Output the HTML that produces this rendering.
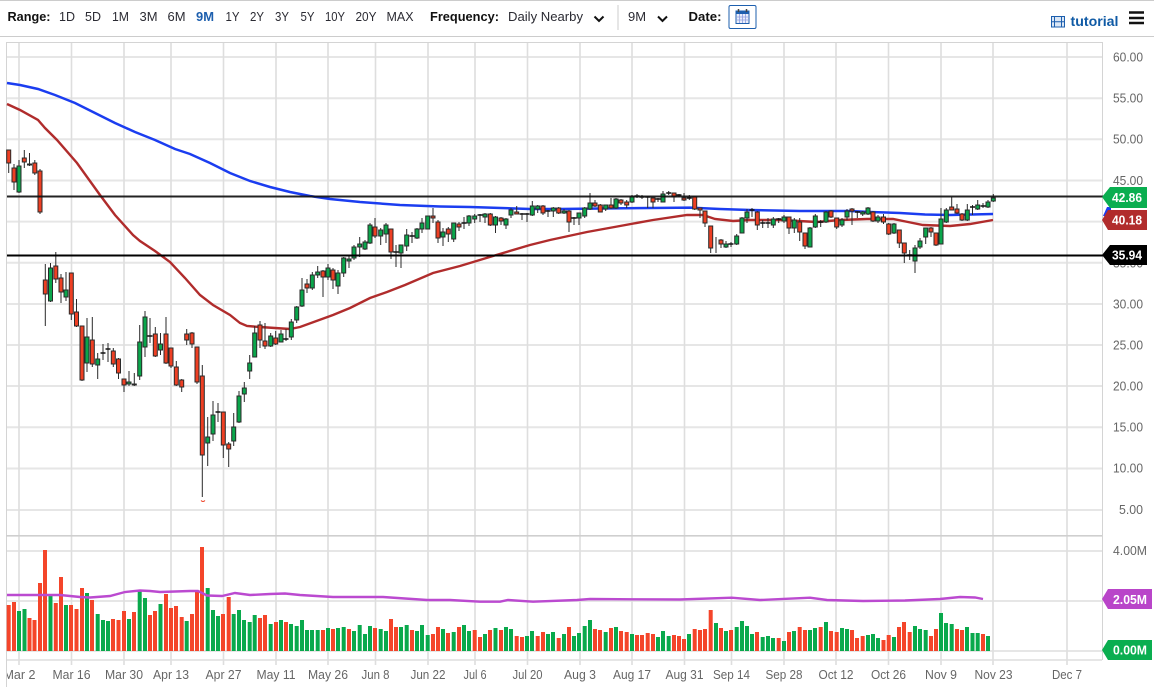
<!DOCTYPE html>
<html><head><meta charset="utf-8"><title>Chart</title>
<style>
html,body{margin:0;padding:0;background:#fff;width:1154px;height:695px;overflow:hidden}
svg{display:block}
text{font-family:"Liberation Sans",sans-serif}
.t{font-size:13px;fill:#2b2b33}
.b{font-size:13px;font-weight:bold;fill:#111}
.a{font-size:12.5px;fill:#666}
.d{font-size:12.5px;fill:#666;text-anchor:middle}
.w{font-size:12.5px;font-weight:bold;fill:#fff;text-anchor:middle}
</style></head><body>
<svg width="1154" height="695" viewBox="0 0 1154 695" xmlns="http://www.w3.org/2000/svg">
<defs><clipPath id="c"><rect x="7" y="660" width="1100" height="30"/></clipPath></defs>
<rect width="1154" height="695" fill="#fff"/>
<!-- toolbar -->
<rect x="0" y="0" width="1154" height="1" fill="#ccc"/>
<rect x="0" y="36" width="1154" height="1" fill="#ccc"/>
<text class="b" x="7.5" y="21" textLength="43" lengthAdjust="spacingAndGlyphs">Range:</text>
<text class="t" x="59" y="21" textLength="16" lengthAdjust="spacingAndGlyphs">1D</text>
<text class="t" x="85" y="21" textLength="16" lengthAdjust="spacingAndGlyphs">5D</text>
<text class="t" x="112" y="21" textLength="17" lengthAdjust="spacingAndGlyphs">1M</text>
<text class="t" x="139.5" y="21" textLength="18" lengthAdjust="spacingAndGlyphs">3M</text>
<text class="t" x="167.5" y="21" textLength="18" lengthAdjust="spacingAndGlyphs">6M</text>
<text x="196" y="21" font-size="13" font-weight="bold" fill="#1d5fae" textLength="18" lengthAdjust="spacingAndGlyphs">9M</text>
<text class="t" x="225.5" y="21" textLength="14" lengthAdjust="spacingAndGlyphs">1Y</text>
<text class="t" x="250" y="21" textLength="14" lengthAdjust="spacingAndGlyphs">2Y</text>
<text class="t" x="275" y="21" textLength="14" lengthAdjust="spacingAndGlyphs">3Y</text>
<text class="t" x="300.5" y="21" textLength="14" lengthAdjust="spacingAndGlyphs">5Y</text>
<text class="t" x="325" y="21" textLength="20" lengthAdjust="spacingAndGlyphs">10Y</text>
<text class="t" x="355.5" y="21" textLength="21" lengthAdjust="spacingAndGlyphs">20Y</text>
<text class="t" x="386.5" y="21" textLength="27" lengthAdjust="spacingAndGlyphs">MAX</text>
<text class="b" x="430" y="21" textLength="69" lengthAdjust="spacingAndGlyphs">Frequency:</text>
<text class="t" x="508" y="21" textLength="75" lengthAdjust="spacingAndGlyphs">Daily Nearby</text>
<path d="M594.5 16.5l4.5 4.5 4.5-4.5" fill="none" stroke="#111" stroke-width="2"/>
<rect x="617.5" y="5" width="1" height="25" fill="#ccc"/>
<text class="t" x="628" y="21" textLength="18" lengthAdjust="spacingAndGlyphs">9M</text>
<path d="M658 16.5l4.5 4.5 4.5-4.5" fill="none" stroke="#111" stroke-width="2"/>
<text class="b" x="688.5" y="21" textLength="33" lengthAdjust="spacingAndGlyphs">Date:</text>
<rect x="729" y="5.5" width="27" height="23" rx="1.5" fill="#fff" stroke="#1d5fae" stroke-width="1"/>
<rect x="736" y="11" width="13" height="12.5" fill="#e9eefb" stroke="#1d5fae"/>
<rect x="736" y="11" width="13" height="3" fill="#1d5fae"/>
<path d="M738.5 9v3M746.5 9v3" stroke="#444" stroke-width="1.5"/>
<path d="M739.5 14v9M742.5 14v9M745.5 14v9M736 17h13M736 20h13" stroke="#8f9fe0" stroke-width=".8"/>
<rect x="1051.5" y="16.5" width="13" height="10.5" fill="#dbe7f5" stroke="#1d5fae"/>
<path d="M1054.5 16.5v10.5M1061.5 16.5v10.5M1051.5 21.7h13" stroke="#1d5fae" stroke-width="1"/>
<text x="1070.5" y="26" font-size="13.5" font-weight="bold" fill="#0f5aa5" textLength="48" lengthAdjust="spacingAndGlyphs">tutorial</text>
<path d="M1129 12.5h15M1129 18h15M1129 23h15" stroke="#111" stroke-width="2.6"/>
<!-- grid -->
<path d="M7 57H1102M7 98.2H1102M7 139.3H1102M7 180.5H1102M7 221.6H1102M7 262.8H1102M7 304H1102M7 345H1102M7 386H1102M7 427.3H1102M7 468.5H1102M7 510H1102M7 551H1102M7 601H1102M7 651H1102M7 660H1102" stroke="#e6e6e6" stroke-width="2" fill="none"/>
<path d="M19 42V665M71.5 42V665M124 42V665M171 42V665M223.5 42V665M276 42V665M328 42V665M375.5 42V665M428 42V665M475 42V665M527.5 42V665M580 42V665M632 42V665M684.5 42V665M731.5 42V665M784 42V665M836 42V665M888.5 42V665M941 42V665M993 42V665M1067 42V665" stroke="#dedede" stroke-width="1.6" fill="none"/>
<rect x="6" y="42" width="1096" height="1" fill="#d4d4d4"/>
<rect x="6" y="42" width="1" height="645" fill="#d4d4d4"/>
<rect x="1102" y="42" width="1" height="618" fill="#d4d4d4"/>
<rect x="6" y="535" width="1096" height="1.6" fill="#cfcfcf"/>
<!-- moving averages -->
<polyline fill="none" stroke="#1b3df0" stroke-width="2.5" points="7,83 20,85 38,89 55,95 75,103 95,113 115,123 135,132 155,140 175,149 190,154 210,163 230,173 250,181 270,187 290,192 310,196 330,199 360,202 400,205 440,206.5 470,207 530,209 560,209 600,208.5 650,208 690,207.6 720,209 750,210 800,211 850,211 870,212 900,213 925,214.5 950,215 993,214"/>
<polyline fill="none" stroke="#b02c2c" stroke-width="2.4" points="7,104 20,110 38,120 45,128 57,140 77,163 100,195 115,215 133,235 140,241 155,251 170,262 185,278 200,295 213,305 230,315 240,323 247,326 260,327 275,328 290,329 300,327 333,315 350,308 370,298 387,292 405,285 433,273 460,266 493,256 530,245 550,240 587,232 620,226 653,220 687,215 703,215 715,219 733,221 750,220 780,220 817,222 840,220 867,219 893,219 908,222 923,225 950,226 970,224 993,220"/>
<!-- wicks -->
<path fill="none" stroke="#2a2a2a" stroke-width="1" d="M8.7 150V173M14 164V190M19 160V193M24.3 150V168M29.5 153V166M34.8 160V175M40 169V214M45.3 264V326M50.5 263V302M55.8 252V283M61 274V303M66 272V301M71.3 273V320M76.5 299V327M82 326V381M87 318V372M92.3 317V367M97.7 353V379M103 344V360M108 343V362M113.3 348V367M118.5 358V379M124 379V392M129 371V386M134.3 373V386M139.7 325V380M145 311V357M150 318V343M155.3 327V357M160.5 333V355M166 317V364M171 348V368M176.3 361V386M181.7 379V392M186.7 329V345M192 332V348M197 347V384M202.3 365V497M207.7 417V466M213 401V441M218 403V422M223.3 412V458M228.7 442V467M233.7 413V446M239 391V423M244.3 382V402M249.7 355V379M254.7 326V357M260 321V348M265 323V349M270.7 333V347M275.7 331V345M281 330V342M286 329V341M291.3 319V340M296.7 306V323M302 278V307M307 279V293M312.3 272V290M317.7 266V278M323 270V297M328 264V280M333 268V289M338 270V294M343.7 257V277M349 255V268M354 245V260M359.7 237V257M365 240V250M370 223V244M375 218V238M380.7 228V245M386 223V243M391 229V259M396 245V267M401 245V268M406.7 229V251M412 232V243M417 228V239M422 218V233M427.7 216V229M433 208V223M438 220V243M443 228V246M448.3 227V242M453.7 223V242M459 222V231M464 217V229M469 215V226M474.7 214V223M480 214V222M485 213V223M490.3 213V226M495.5 216V233M501 217V225M506 218V229M511 208V218M516.7 206V214M522 213V220M527 213V222M532.3 201V216M537.7 205V213M543 205V215M548 210V217M553.3 207V217M558.7 207V214M564 209V214M569 210V232M574 217V225M579 213V225M584.7 207V218M590 193V210M595 200V207M600.3 204V212M605.7 205V211M611 198V209M616 198V209M621 199V205M626.7 200V208M632 195V203M637 194V198M642 195V199M647.7 196V208M653 198V208M658 198V202M663 191V202M668.7 191V195M674 193V202M679 194V197M684 193V201M689.3 195V200M694.7 197V210M700 208V218M705 211V227M710.7 226V253M716 237V253M721 239V248M726 241V248M731 242V247M736.7 234V245M742 217V233M747 209V223M752 208V217M757.3 211V230M762.7 220V228M768 218V228M773.3 217V228M778.7 218V223M784 215V223M789 217V234M794.3 218V233M799.7 218V241M805 233V249M810 227V247M815.3 214V228M820.7 220V227M826 211V223M831 210V218M836.7 218V229M842 218V227M847 209V220M852 208V225M857.3 211V218M862.7 211V216M868 207V215M873 211V222M878 215V223M883.5 214V224M888.7 223V235M894 223V234M899.3 230V248M904.3 243V263M909.7 250V260M915 245V273M920 238V249M925.7 228V244M931 227V237M936 233V246M941 208V244M946.3 208V223M951.7 197V210M957 204V214M962 213V221M967.3 204V221M972.5 205V215M977.7 200V210M983 203V208M988 200V208M993.3 194V202"/>
<path fill="none" stroke="#111" stroke-width="1.4" d="M100.5 353h5M105.5 349h5M147.5 336h5M215.5 412h5M283.5 339h5M393.5 252h5M409.5 236h5M461.5 223h5M477.5 215h5M519.5 214h5M524.5 214h5M545.5 211h5M571.5 218h5M634.5 196h5M639.5 197h5M645.2 197h5M655.5 199h5M666.2 193h5M676.5 195h5M686.8 198h5M728.5 244h5M749.5 210h5M760.2 223h5M765.5 223h5M776.2 219h5M818.2 222h5M855 212h5M907.2 255h5M970 207h5M980.5 206h5"/>
<!-- red bodies -->
<path fill="#ee3f23" stroke="#2a2a2a" stroke-width="1" d="M6.7 150h4v13h-4zM12 168h4v14h-4zM22.3 158h4v4h-4zM27.5 164h4v1h-4zM32.8 163h4v10h-4zM38 171h4v41h-4zM43.3 280h4v14h-4zM53.8 266h4v13h-4zM59 278h4v14h-4zM69.3 273h4v41h-4zM74.5 312h4v14h-4zM80 326h4v54h-4zM90.3 340h4v24h-4zM111.3 351h4v13h-4zM116.5 359h4v14h-4zM122 379h4v6h-4zM153.3 334h4v22h-4zM164 334h4v29h-4zM169 348h4v18h-4zM174.3 367h4v18h-4zM179.7 380h4v7h-4zM184.7 334h4v6h-4zM190 333h4v11h-4zM195 347h4v35h-4zM200.3 376h4v79h-4zM221.3 412h4v33h-4zM226.7 444h4v5h-4zM258 325h4v15h-4zM263 341h4v5h-4zM273.7 338h4v6h-4zM305 284h4v4h-4zM321 271h4v6h-4zM331 270h4v10h-4zM373 227h4v9h-4zM389 229h4v23h-4zM431 216h4v2h-4zM436 222h4v16h-4zM446.3 229h4v5h-4zM457 224h4v3h-4zM488.3 214h4v11h-4zM499 218h4v3h-4zM514.7 212h4v2h-4zM541 206h4v7h-4zM556.7 208h4v5h-4zM567 211h4v11h-4zM593 203h4v3h-4zM598.3 205h4v7h-4zM609 205h4v3h-4zM619 200h4v3h-4zM624.7 202h4v3h-4zM651 198h4v4h-4zM672 193h4v4h-4zM682 198h4v2h-4zM692.7 197h4v12h-4zM698 208h4v2h-4zM703 211h4v12h-4zM708.7 226h4v22h-4zM719 240h4v4h-4zM755.3 212h4v13h-4zM787 217h4v11h-4zM797.7 222h4v10h-4zM803 233h4v13h-4zM829 211h4v6h-4zM834.7 218h4v9h-4zM850 209h4v2h-4zM871 212h4v9h-4zM881.5 217h4v5h-4zM886.7 224h4v10h-4zM897.3 230h4v13h-4zM902.3 243h4v10h-4zM929 228h4v4h-4zM934 233h4v12h-4zM949.7 207h4v3h-4zM955 209h4v4h-4zM960 214h4v6h-4z"/>
<!-- green bodies -->
<path fill="#0aa64b" stroke="#2a2a2a" stroke-width="1" d="M17 166h4v26h-4zM48.5 268h4v33h-4zM64 290h4v7h-4zM85 337h4v26h-4zM95.7 359h4v6h-4zM127 382h4v2h-4zM132.3 384h4v1h-4zM137.7 342h4v34h-4zM143 317h4v30h-4zM158.5 344h4v6h-4zM205.7 437h4v6h-4zM211 415h4v19h-4zM231.7 427h4v14h-4zM237 396h4v26h-4zM242.3 388h4v6h-4zM247.7 363h4v8h-4zM252.7 333h4v24h-4zM268.7 336h4v10h-4zM279 334h4v8h-4zM289.3 322h4v15h-4zM294.7 307h4v13h-4zM300 290h4v16h-4zM310.3 275h4v13h-4zM315.7 272h4v3h-4zM326 268h4v9h-4zM336 273h4v13h-4zM341.7 258h4v15h-4zM347 259h4v2h-4zM352 247h4v11h-4zM357.7 244h4v3h-4zM363 242h4v7h-4zM368 225h4v18h-4zM378.7 230h4v6h-4zM384 225h4v9h-4zM399 245h4v8h-4zM404.7 235h4v11h-4zM415 229h4v9h-4zM420 223h4v6h-4zM425.7 216h4v13h-4zM441 232h4v5h-4zM451.7 223h4v16h-4zM467 216h4v7h-4zM472.7 216h4v3h-4zM483 214h4v3h-4zM493.5 217h4v8h-4zM504 219h4v6h-4zM509 210h4v5h-4zM530.3 206h4v9h-4zM535.7 206h4v3h-4zM551.3 208h4v3h-4zM562 211h4v2h-4zM577 213h4v5h-4zM582.7 208h4v8h-4zM588 203h4v6h-4zM603.7 205h4v4h-4zM614 199h4v9h-4zM630 197h4v5h-4zM661 194h4v8h-4zM724 244h4v3h-4zM734.7 236h4v8h-4zM740 218h4v15h-4zM745 212h4v6h-4zM771.3 219h4v6h-4zM782 217h4v4h-4zM792.3 220h4v8h-4zM808 228h4v19h-4zM813.3 216h4v11h-4zM824 212h4v10h-4zM840 220h4v5h-4zM845 211h4v6h-4zM860.7 212h4v2h-4zM866 208h4v6h-4zM876 217h4v4h-4zM892 224h4v9h-4zM913 248h4v13h-4zM918 241h4v6h-4zM923.7 228h4v9h-4zM939 219h4v25h-4zM944.3 210h4v12h-4zM965.3 210h4v10h-4zM975.7 205h4v4h-4zM986 202h4v5h-4zM991.3 198h4v3h-4z"/>
<path d="M201 500.5q2 2 4 0" fill="none" stroke="#ee3f23" stroke-width="1"/>
<!-- key levels -->
<path d="M7 196.5H1103" stroke="#111" stroke-width="2" opacity=".92"/>
<path d="M7 255.5H1103" stroke="#000" stroke-width="2"/>
<!-- volume -->
<path fill="none" stroke="#f4452a" stroke-width="4" d="M8.7 651V605M14 651V602M29.5 651V618M34.5 651V620M40 651V583M45 651V550M55.8 651V603M61 651V577M71 651V605M76.5 651V609M82 651V588M92 651V600M113 651V619M118.5 651V620M124 651V611M134 651V612M150 651V615M155 651V611M166 651V594M171 651V608M176 651V606M181.7 651V617M192 651V614M197 651V592M202 651V547M223 651V614M228.7 651V597M260 651V618M265 651V615M276 651V622M286 651V622M323 651V630M333 651V629M349 651V629M375 651V628M391 651V619M396 651V627M412 651V630M433 651V634M438 651V627M448 651V633M459 651V627M474.7 651V630M480 651V637M490 651V630M501 651V630M516.7 651V636M522 651V637M537.7 651V636M543 651V632M558.7 651V638M569 651V627M595 651V629M600 651V630M611 651V628M621 651V631M626.7 651V632M637 651V635M642 651V635M647.7 651V633M653 651V634M674 651V635M679 651V636M684 651V639M694.7 651V629M700 651V630M705 651V629M710.7 651V610M721 651V628M731 651V630M757 651V632M778.7 651V638M789 651V632M799.7 651V627M805 651V630M820.7 651V627M831 651V631M836.7 651V632M852 651V630M857 651V638M862.7 651V636M883.5 651V640M888.7 651V635M899 651V627M904 651V622M909.7 651V632M931 651V636M936 651V629M957 651V629M962 651V630M983 651V634"/>
<path fill="none" stroke="#09a94c" stroke-width="4" d="M19 651V611M24.5 651V609M50.5 651V596M66 651V605M87 651V593M97.7 651V614M103 651V620M108 651V621M129 651V619M139.7 651V590M145 651V598M160.5 651V604M186.7 651V621M207.7 651V588M213 651V610M218 651V616M233.7 651V614M239 651V610M244 651V620M249.7 651V622M254.7 651V615M270.7 651V624M281 651V620M291 651V624M296.7 651V626M302 651V620M307 651V630M312 651V630M317.7 651V630M328 651V628M338 651V628M343.7 651V627M354 651V631M359.7 651V625M365 651V634M370 651V626M380.7 651V629M386 651V631M401 651V627M406.7 651V625M417 651V631M422 651V625M427.7 651V635M443 651V629M453.7 651V632M464 651V625M469 651V631M485 651V634M495.5 651V628M506 651V627M511 651V629M527 651V636M532 651V631M548 651V634M553 651V632M564 651V634M574 651V636M579 651V633M584.7 651V626M590 651V620M605.7 651V632M616 651V627M632 651V634M658 651V637M663 651V631M668.7 651V636M689 651V634M716 651V623M726 651V631M736.7 651V627M742 651V621M747 651V626M752 651V634M762.7 651V637M768 651V636M773 651V638M784 651V641M794 651V631M810 651V630M815 651V628M826 651V622M842 651V628M847 651V629M868 651V635M873 651V634M878 651V638M894 651V637M915 651V626M920 651V629M925.7 651V630M941 651V613M946 651V623M951.7 651V624M967 651V627M972.5 651V633M977.7 651V633M988 651V636"/>
<polyline fill="none" stroke="#bb4ad0" stroke-width="2.4" points="7,595 40,595 60,595 80,597 90,597.5 110,596 125,592 140,590.5 150,591 160,592 190,591 198,591 207,595.5 222,596 235,593 250,595 270,594 285,593.5 300,595 333,597 383,597 427,600 450,600 480,601.7 500,601.7 508,600 533,601.7 577,600 590,599 633,599.3 680,599.5 731.7,597.7 760,600 810,597.7 827,600 863,601 905,600.5 940,599 960,597 975,597.5 983,599"/>
<!-- axis labels -->
<text class="a" x="1113" y="61.5" textLength="30" lengthAdjust="spacingAndGlyphs">60.00</text>
<text class="a" x="1113" y="102.5" textLength="30" lengthAdjust="spacingAndGlyphs">55.00</text>
<text class="a" x="1113" y="143.5" textLength="30" lengthAdjust="spacingAndGlyphs">50.00</text>
<text class="a" x="1113" y="185" textLength="30" lengthAdjust="spacingAndGlyphs">45.00</text>
<text class="a" x="1113" y="267.5" textLength="30" lengthAdjust="spacingAndGlyphs">35.00</text>
<text class="a" x="1113" y="308.5" textLength="30" lengthAdjust="spacingAndGlyphs">30.00</text>
<text class="a" x="1113" y="349.5" textLength="30" lengthAdjust="spacingAndGlyphs">25.00</text>
<text class="a" x="1113" y="390.5" textLength="30" lengthAdjust="spacingAndGlyphs">20.00</text>
<text class="a" x="1113" y="431.5" textLength="30" lengthAdjust="spacingAndGlyphs">15.00</text>
<text class="a" x="1113" y="472.5" textLength="30" lengthAdjust="spacingAndGlyphs">10.00</text>
<text class="a" x="1119" y="514" textLength="24" lengthAdjust="spacingAndGlyphs">5.00</text>
<text class="a" x="1113" y="555" textLength="34" lengthAdjust="spacingAndGlyphs">4.00M</text>
<!-- tags -->
<path d="M1103 216l4-9h4v9z" fill="#1b3df0"/>
<path d="M1102 197l8-10h37v21h-37z" fill="#0aae50"/>
<text class="w" x="1127" y="202" textLength="30" lengthAdjust="spacingAndGlyphs">42.86</text>
<path d="M1102 220l6-10h39v20h-39z" fill="#b12c2c"/>
<text class="w" x="1127" y="224.5" textLength="30" lengthAdjust="spacingAndGlyphs">40.18</text>
<path d="M1102 255l8-10h37v20h-37z" fill="#000"/>
<text class="w" x="1127" y="259.5" textLength="30" lengthAdjust="spacingAndGlyphs">35.94</text>
<path d="M1102 599l6-10h44v20h-44z" fill="#b945c9"/>
<text class="w" x="1130" y="604" textLength="34" lengthAdjust="spacingAndGlyphs">2.05M</text>
<path d="M1102 650l6-10h44v20h-44z" fill="#0aae50"/>
<text class="w" x="1130" y="654.5" textLength="34" lengthAdjust="spacingAndGlyphs">0.00M</text>
<!-- dates -->
<g clip-path="url(#c)"><text class="d" x="19.5" y="679" textLength="32" lengthAdjust="spacingAndGlyphs">Mar 2</text></g>
<text class="d" x="71.5" y="679" textLength="38" lengthAdjust="spacingAndGlyphs">Mar 16</text>
<text class="d" x="124" y="679" textLength="38" lengthAdjust="spacingAndGlyphs">Mar 30</text>
<text class="d" x="171" y="679" textLength="36" lengthAdjust="spacingAndGlyphs">Apr 13</text>
<text class="d" x="223.5" y="679" textLength="36" lengthAdjust="spacingAndGlyphs">Apr 27</text>
<text class="d" x="276" y="679" textLength="39" lengthAdjust="spacingAndGlyphs">May 11</text>
<text class="d" x="328" y="679" textLength="40" lengthAdjust="spacingAndGlyphs">May 26</text>
<text class="d" x="375.5" y="679" textLength="28" lengthAdjust="spacingAndGlyphs">Jun 8</text>
<text class="d" x="428" y="679" textLength="35" lengthAdjust="spacingAndGlyphs">Jun 22</text>
<text class="d" x="475" y="679" textLength="23" lengthAdjust="spacingAndGlyphs">Jul 6</text>
<text class="d" x="527.5" y="679" textLength="30" lengthAdjust="spacingAndGlyphs">Jul 20</text>
<text class="d" x="580" y="679" textLength="32" lengthAdjust="spacingAndGlyphs">Aug 3</text>
<text class="d" x="632" y="679" textLength="38" lengthAdjust="spacingAndGlyphs">Aug 17</text>
<text class="d" x="684.5" y="679" textLength="38" lengthAdjust="spacingAndGlyphs">Aug 31</text>
<text class="d" x="731.5" y="679" textLength="37" lengthAdjust="spacingAndGlyphs">Sep 14</text>
<text class="d" x="784" y="679" textLength="37" lengthAdjust="spacingAndGlyphs">Sep 28</text>
<text class="d" x="836" y="679" textLength="35" lengthAdjust="spacingAndGlyphs">Oct 12</text>
<text class="d" x="888.5" y="679" textLength="35" lengthAdjust="spacingAndGlyphs">Oct 26</text>
<text class="d" x="941" y="679" textLength="32" lengthAdjust="spacingAndGlyphs">Nov 9</text>
<text class="d" x="993.5" y="679" textLength="38" lengthAdjust="spacingAndGlyphs">Nov 23</text>
<text class="d" x="1067" y="679" textLength="30" lengthAdjust="spacingAndGlyphs">Dec 7</text>
</svg>
</body></html>
